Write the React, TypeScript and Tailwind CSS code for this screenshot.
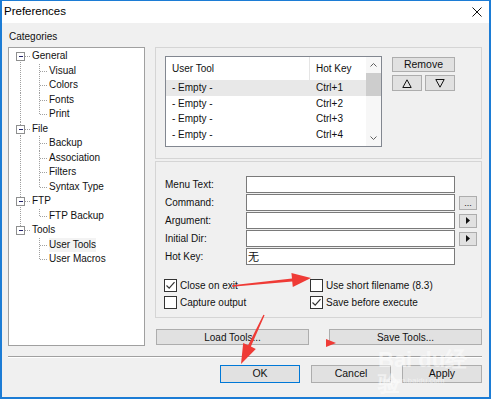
import React from 'react';

const tree = [
  { label: 'General', children: ['Visual', 'Colors', 'Fonts', 'Print'] },
  { label: 'File', children: ['Backup', 'Association', 'Filters', 'Syntax Type'] },
  { label: 'FTP', children: ['FTP Backup'] },
  { label: 'Tools', children: ['User Tools', 'User Macros'] },
];

const tools = [
  { name: '- Empty -', key: 'Ctrl+1' },
  { name: '- Empty -', key: 'Ctrl+2' },
  { name: '- Empty -', key: 'Ctrl+3' },
  { name: '- Empty -', key: 'Ctrl+4' },
];

const fields = [
  { label: 'Menu Text:', value: '', btn: '' },
  { label: 'Command:', value: '', btn: 'dots' },
  { label: 'Argument:', value: '', btn: 'arrow' },
  { label: 'Initial Dir:', value: '', btn: 'arrow' },
  { label: 'Hot Key:', value: '无', btn: '' },
];

const dot = { stroke: '#a0a0a0', strokeDasharray: '1 1', shapeRendering: 'crispEdges' as const };

function RootRow({ label, first, last }: { label: string; first: boolean; last: boolean }) {
  return (
    <div className="flex h-[14.5px] items-center">
      <svg width="23" height="14.5" className="shrink-0">
        {!first && <line x1="11.5" y1="0" x2="11.5" y2="7" {...dot} />}
        {!last && <line x1="11.5" y1="7" x2="11.5" y2="14.5" {...dot} />}
        <line x1="16" y1="7.5" x2="21" y2="7.5" {...dot} />
        <rect x="7.5" y="3.5" width="8" height="8" fill="#fff" stroke="#8e8f8f" shapeRendering="crispEdges" />
        <line x1="9.5" y1="7.5" x2="14" y2="7.5" stroke="#23236b" shapeRendering="crispEdges" />
      </svg>
      <span className="leading-[14px]">{label}</span>
    </div>
  );
}

function ChildRow({ label, rootLine, lastChild, selected }: { label: string; rootLine: boolean; lastChild: boolean; selected: boolean }) {
  return (
    <div className="flex h-[14.5px] items-center">
      <svg width="40" height="14.5" className="shrink-0">
        {rootLine && <line x1="11.5" y1="0" x2="11.5" y2="14.5" {...dot} />}
        <line x1="30.5" y1="0" x2="30.5" y2={lastChild ? 7.5 : 14.5} {...dot} />
        <line x1="31" y1="7.5" x2="38" y2="7.5" {...dot} />
      </svg>
      <span className={'leading-[14px] ' + (selected ? 'bg-[#f3f3f3]' : '')}>{label}</span>
    </div>
  );
}

function Check({ checked, label }: { checked: boolean; label: string }) {
  return (
    <div className="flex items-center gap-[3px]">
      <div className="w-[13px] h-[13px] border border-[#333] bg-white flex items-center justify-center">
        {checked && (
          <svg width="11" height="11" viewBox="0 0 11 11">
            <path d="M1.5 5.5 L4.2 8.2 L9.5 2.2" fill="none" stroke="#333" strokeWidth="1.2" />
          </svg>
        )}
      </div>
      <span className="leading-[14px]">{label}</span>
    </div>
  );
}

export default function App() {
  return (
    <div className="w-[493px] h-[399px] bg-white text-[10px] text-[#111] font-[family-name:Liberation_Sans,Arial,sans-serif]">
      <div className="relative w-[491px] h-[399px] border-t border-x-2 border-b-2 border-[#1c7cd5] bg-[#f0f0f0] flex flex-col">
        {/* title bar */}
        <div className="h-[22px] bg-white flex items-center pl-[2px] pr-[6px]">
          <span className="text-[11.5px] text-black">Preferences</span>
          <svg width="10" height="10" className="ml-auto mr-[1px]">
            <path d="M0.5 0.5 L9.5 9.5 M9.5 0.5 L0.5 9.5" stroke="#111" strokeWidth="1" />
          </svg>
        </div>

        <div className="flex flex-col pl-[6px] pr-[7px]">
          <div className="mt-[7px] h-[14px] leading-[14px] pl-[1px]">Categories</div>

          <div className="mt-[3px] flex h-[299px]">
            {/* tree */}
            <div className="w-[137px] h-full border border-[#a0a0a0] bg-white pt-[1px]">
              {tree.map((g, gi) => (
                <React.Fragment key={g.label}>
                  <RootRow label={g.label} first={gi === 0} last={gi === tree.length - 1} />
                  {g.children.map((c, ci) => (
                    <ChildRow
                      key={c}
                      label={c}
                      rootLine={gi !== tree.length - 1}
                      lastChild={ci === g.children.length - 1}
                      selected={c === 'User Tools'}
                    />
                  ))}
                </React.Fragment>
              ))}
            </div>

            {/* right column */}
            <div className="ml-[10px] w-[327px] flex flex-col">
              <div className="h-[112px] border border-[#d5d5d5] flex items-start">
                <div className="ml-[9px] mt-[8px] w-[217px] h-[91px] border border-[#828790] bg-white flex">
                  <div className="w-[200px] flex flex-col">
                    <div className="h-[23px] flex items-center">
                      <div className="w-[144px] h-full pl-[6px] flex items-center border-r border-[#e5e5e5]">User Tool</div>
                      <div className="pl-[6px]">Hot Key</div>
                    </div>
                    {tools.map((t, i) => (
                      <div key={t.key} className={'h-[15.5px] flex items-center ' + (i === 0 ? 'bg-[#e8e8e8]' : '')}>
                        <div className="w-[144px] pl-[6px]">{t.name}</div>
                        <div className="pl-[6px]">{t.key}</div>
                      </div>
                    ))}
                  </div>
                  <div className="w-[15px] bg-[#f7f7f7] flex flex-col">
                    <div className="h-[16px] flex items-center justify-center">
                      <svg width="7" height="4"><path d="M0.5 3.5 L3.5 0.5 L6.5 3.5" fill="none" stroke="#606060" /></svg>
                    </div>
                    <div className="h-[23px] bg-[#cdcdcd]" />
                    <div className="flex-1" />
                    <div className="h-[16px] flex items-center justify-center">
                      <svg width="7" height="4"><path d="M0.5 0.5 L3.5 3.5 L6.5 0.5" fill="none" stroke="#606060" /></svg>
                    </div>
                  </div>
                </div>
                <div className="ml-[10px] mt-[9px] w-[63px] flex flex-col">
                  <div className="h-[15px] bg-[#e1e1e1] border border-[#adadad] flex items-center justify-center text-[10.5px]">Remove</div>
                  <div className="mt-[3px] flex gap-[3px]">
                    <div className="w-[30px] h-[16px] bg-[#e1e1e1] border border-[#adadad] flex items-center justify-center">
                      <svg width="10" height="9"><path d="M5 0.8 L9.2 8.5 L0.8 8.5 Z" fill="none" stroke="#111" /></svg>
                    </div>
                    <div className="w-[30px] h-[16px] bg-[#e1e1e1] border border-[#adadad] flex items-center justify-center">
                      <svg width="10" height="9"><path d="M0.8 0.5 L9.2 0.5 L5 8.2 Z" fill="none" stroke="#111" /></svg>
                    </div>
                  </div>
                </div>
              </div>

              <div className="mt-[2px] h-[157px] border border-[#d5d5d5] flex flex-col">
                <div className="mt-[14px] pl-[9px] flex flex-col gap-[1px]">
                  {fields.map(f => (
                    <div key={f.label} className="h-[17px] flex items-center">
                      <div className="w-[81px]">{f.label}</div>
                      <div className="w-[209px] h-[17px] border border-[#7a7a7a] bg-white flex items-center pl-[1px] text-[11px] font-[family-name:Noto_Sans_CJK_SC,sans-serif] leading-[15px]">
                        {f.value}
                      </div>
                      {f.btn && (
                        <div className="ml-[4px] w-[18px] h-[14px] bg-[#e1e1e1] border border-[#adadad] flex items-center justify-center">
                          {f.btn === 'dots' ? (
                            <span className="text-[9px] leading-[9px] mt-[2px]">...</span>
                          ) : (
                            <svg width="4" height="7"><path d="M0 0 L4 3.5 L0 7 Z" fill="#111" /></svg>
                          )}
                        </div>
                      )}
                    </div>
                  ))}
                </div>
                <div className="mt-[13px] pl-[8px] flex flex-col gap-[2px]">
                  <div className="h-[15px] flex items-center">
                    <div className="w-[146px]"><Check checked label="Close on exit" /></div>
                    <Check checked={false} label="Use short filename (8.3)" />
                  </div>
                  <div className="h-[15px] flex items-center">
                    <div className="w-[146px]"><Check checked={false} label="Capture output" /></div>
                    <Check checked label="Save before execute" />
                  </div>
                </div>
              </div>

              <div className="mt-[11px] h-[16px] flex">
                <div className="ml-[1px] w-[153px] bg-[#e1e1e1] border border-[#adadad] flex items-center justify-center">Load Tools...</div>
                <div className="ml-auto w-[153px] bg-[#e1e1e1] border border-[#adadad] flex items-center justify-center">Save Tools...</div>
              </div>
            </div>
          </div>

          <div className="mt-[10px] h-[2px] border-t border-[#a0a0a0] border-b border-b-white" />

          <div className="mt-[7px] h-[18px] flex justify-end gap-[11px]">
            <div className="w-[80px] bg-[#e1e1e1] border border-[#0078d7] flex items-center justify-center text-[10.5px]">OK</div>
            <div className="w-[80px] bg-[#e1e1e1] border border-[#adadad] flex items-center justify-center text-[10.5px]">Cancel</div>
            <div className="w-[80px] bg-[#e1e1e1] border border-[#adadad] flex items-center justify-center text-[10.5px]">Apply</div>
          </div>
        </div>

        {/* watermark */}
        <div className="absolute left-[376px] top-[347px] text-[22px] font-bold text-white/50 leading-[24px] pointer-events-none">Bai du经验</div>
        <div className="absolute left-[378px] top-[374px] text-[8px] text-white/50 pointer-events-none">jingyan.baidu.com</div>
      </div>

      {/* red annotation arrows */}
      <svg className="absolute left-0 top-0 pointer-events-none" width="493" height="399">
        <polygon
          points="232,285.3 292,278.4 291.4,272.9 311,278 292.8,286.9 292.2,281.4 232,286.7"
          fill="#ef3b36"
        />
        <polygon
          points="263.4,314.7 248.1,345.3 243.2,342.9 241,364 255.8,348.9 250.9,346.5 264.6,315.3"
          fill="#ef3b36"
        />
        <polygon points="326,339 336,343 326,347" fill="#ef3b36" />
      </svg>
    </div>
  );
}
